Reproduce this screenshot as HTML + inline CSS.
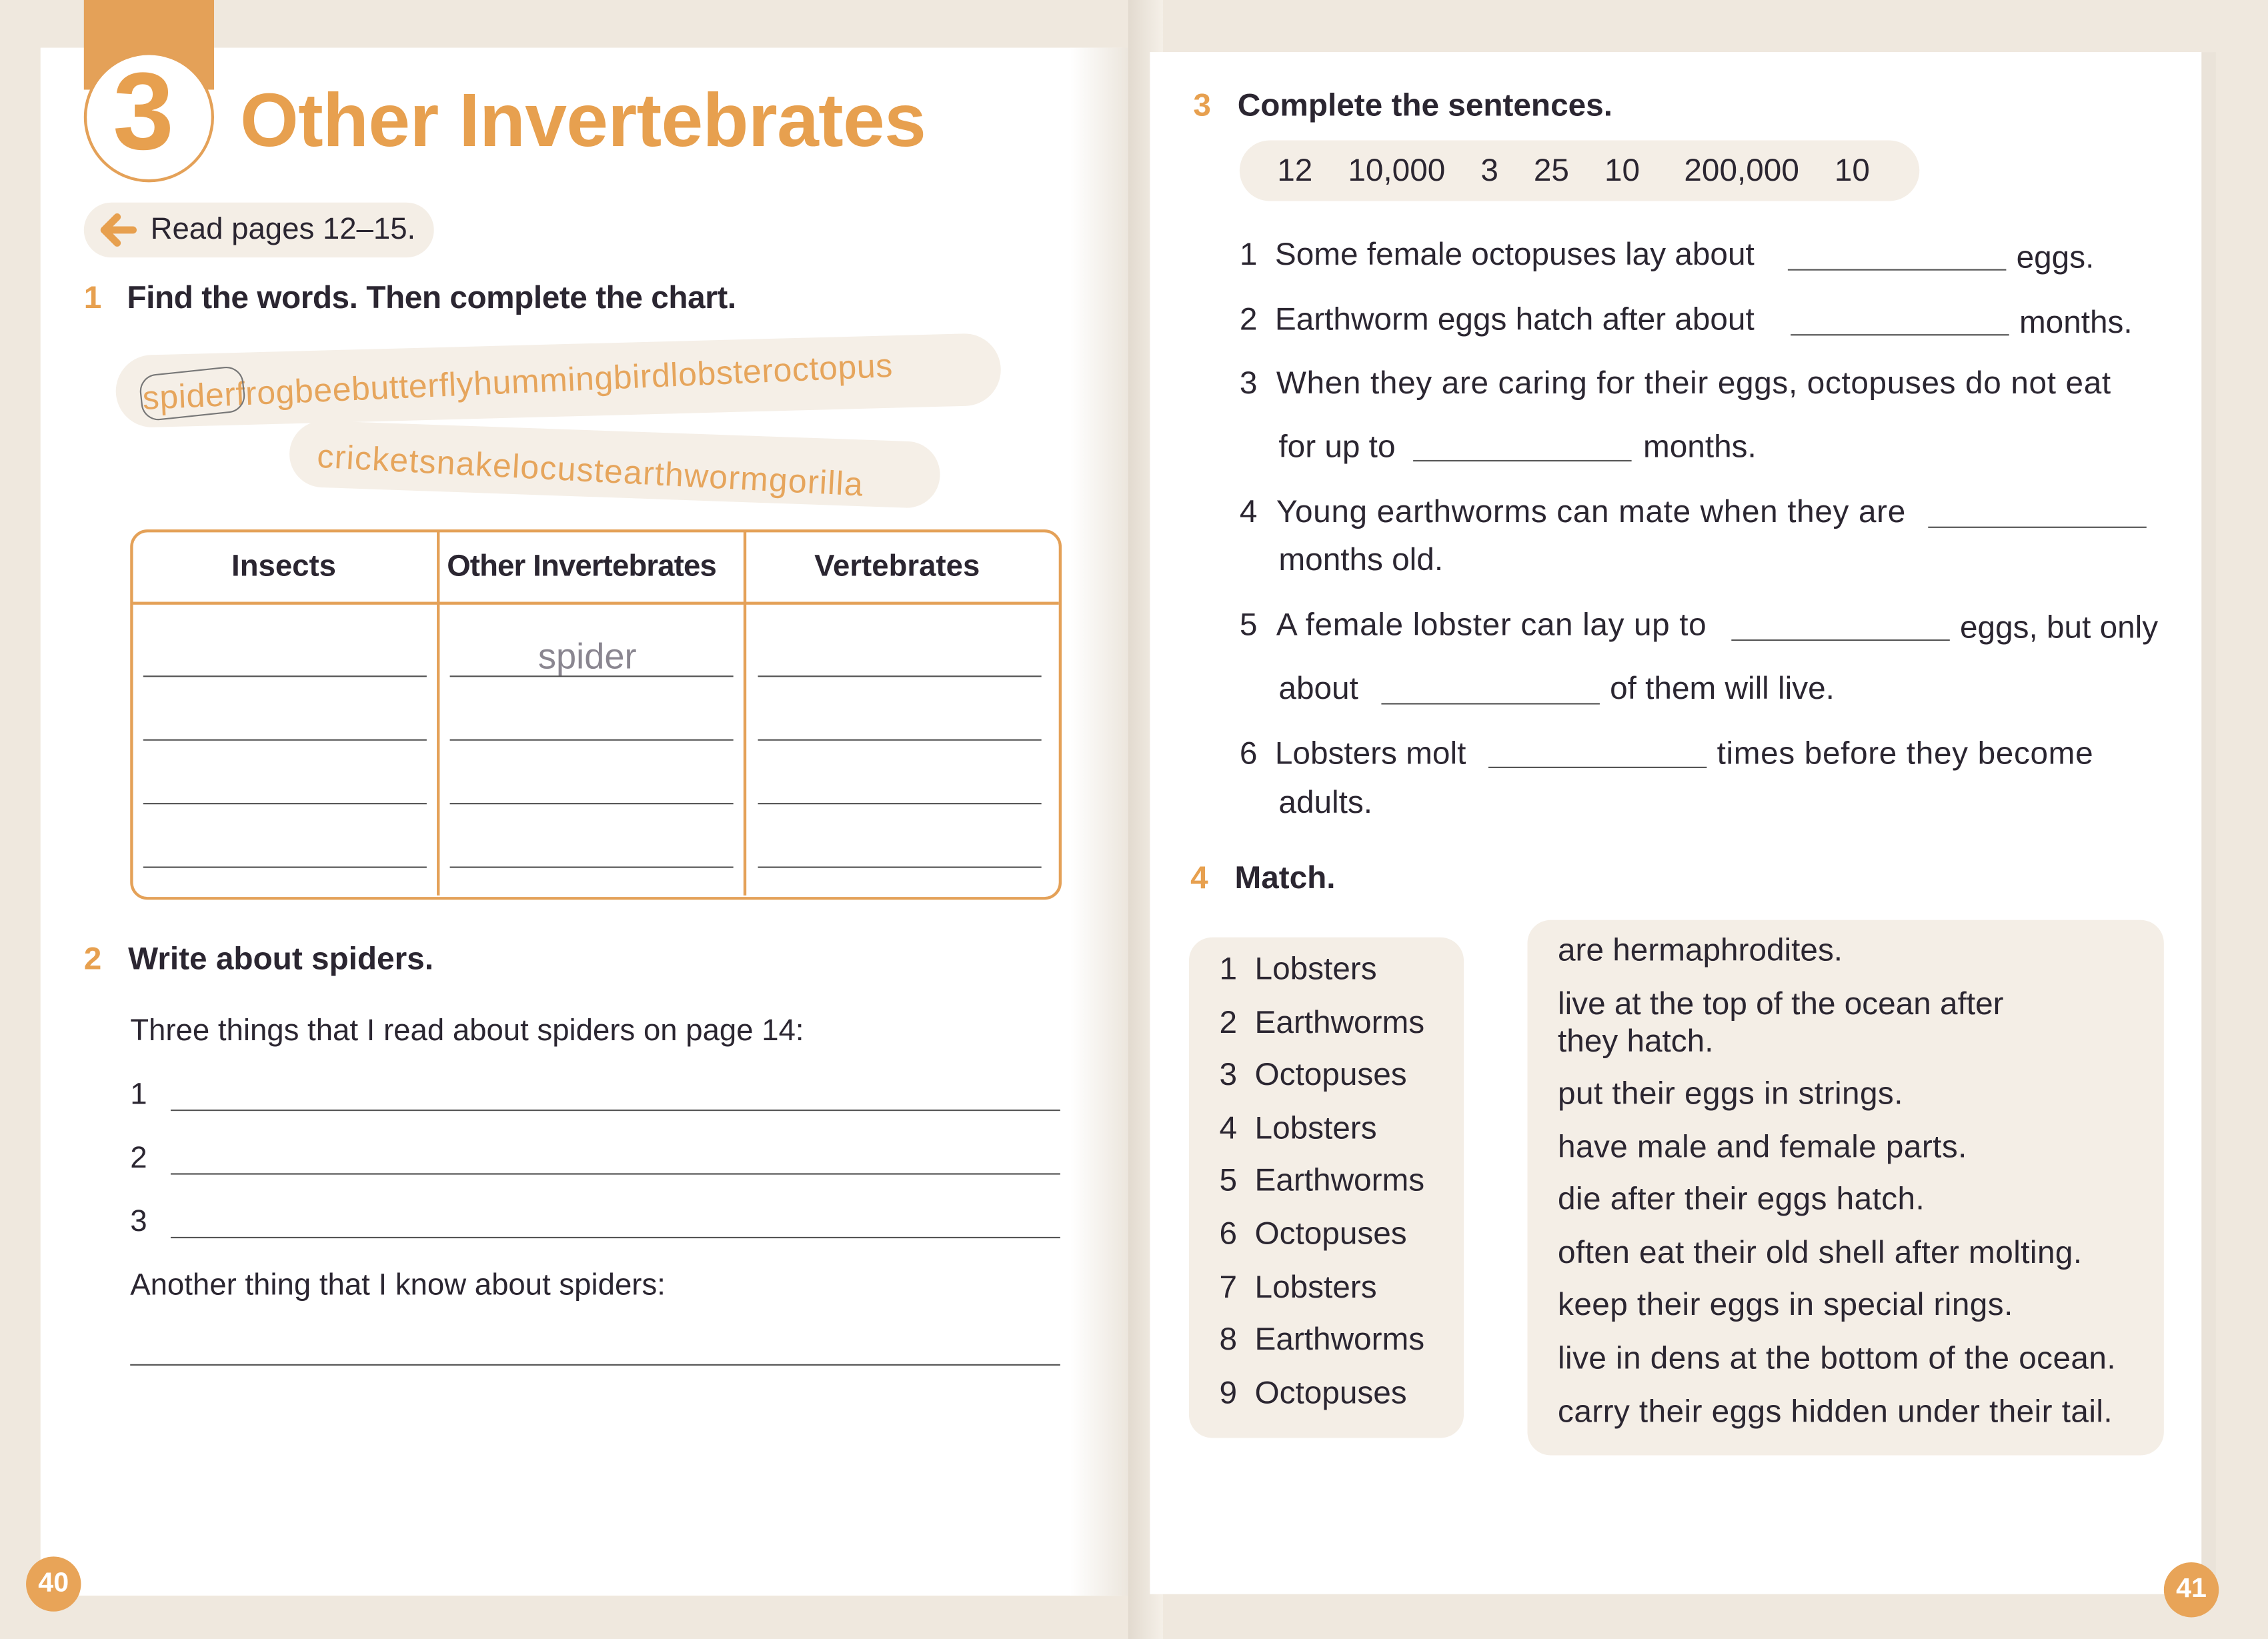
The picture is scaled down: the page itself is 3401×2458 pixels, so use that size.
<!DOCTYPE html>
<html><head><meta charset="utf-8"><style>
html,body{margin:0;padding:0;width:3401px;height:2458px;overflow:hidden;background:#efe8de}
#w{position:absolute;left:0;top:0;width:1568px;height:1133px;transform:scale(2.16901,2.16946);transform-origin:0 0;font-family:"Liberation Sans",sans-serif;color:#2b2631}
.a{position:absolute;white-space:nowrap}
.t{font-size:22px}
.o{color:#e7a04f;font-weight:bold}
.b{font-weight:bold}
.ln{position:absolute;border-bottom:1.3px solid #555;height:0}
</style></head><body><div id="w">
<div class="a" style="left:28px;top:33px;width:748px;height:1070px;background:#fff"></div>
<div class="a" style="left:740px;top:33px;width:40px;height:1070px;background:linear-gradient(90deg,#fff,#ece6dd)"></div>
<div class="a" style="left:780px;top:0;width:24px;height:1133px;background:linear-gradient(90deg,#e2dacf,#f5f0e8)"></div>
<div class="a" style="left:795px;top:36px;width:735px;height:1066px;background:#fff"></div>
<div class="a" style="left:1522px;top:36px;width:10px;height:1066px;background:#eae3d9"></div>

<div class="a" style="left:58px;top:0;width:90px;height:62px;background:#e4a158"></div>
<div class="a" style="left:58px;top:36px;width:86px;height:86px;border-radius:50%;background:#fff;border:2px solid #e4a158"></div>
<div class="a o" style="left:78px;top:34px;font-size:76px;letter-spacing:-2px">3</div>
<div class="a o" style="left:166px;top:54px;font-size:52px;letter-spacing:-0.3px">Other Invertebrates</div>

<div class="a" style="left:58px;top:140px;width:242px;height:38px;border-radius:19px;background:#f4eee6"></div>
<svg class="a" style="left:66px;top:146px" width="30" height="26" viewBox="0 0 30 26"><path d="M26 13H7M15 4L6 13l9 9" fill="none" stroke="#e7a04f" stroke-width="5" stroke-linecap="round" stroke-linejoin="round"/></svg>
<div class="a t" style="left:104px;top:147px;font-size:21px">Read pages 12–15.</div>

<div class="a t b" style="left:58px;top:193px;letter-spacing:-0.2px"><span class="o">1</span>&nbsp;&nbsp;&nbsp;Find the words. Then complete the chart.</div>

<div class="a" style="left:80px;top:238px;width:612px;height:50px;border-radius:25px;background:#f5efe7;transform:rotate(-1.5deg)"></div>
<div class="a" style="left:200px;top:298px;width:450px;height:46px;border-radius:23px;background:#f5efe7;transform:rotate(2deg)"></div>
<div class="a" style="left:98px;top:262px;font-size:23px;letter-spacing:0.3px;color:#e6a55c;transform:rotate(-2.5deg);transform-origin:0 0">spiderfrogbeebutterflyhummingbirdlobsteroctopus</div>
<div class="a" style="left:97px;top:256px;width:70px;height:30px;border:1.5px solid #777;border-radius:12px;transform:rotate(-6deg)"></div>
<div class="a" style="left:220px;top:302px;font-size:23px;letter-spacing:0.6px;color:#e6a55c;transform:rotate(3deg);transform-origin:0 0">cricketsnakelocustearthwormgorilla</div>

<div class="a" style="left:90px;top:366px;width:640px;height:252px;border:2px solid #e4a158;border-radius:12px"></div>
<div class="a" style="left:92px;top:416px;width:640px;border-top:2px solid #e4a158"></div>
<div class="a" style="left:302px;top:367px;height:252px;border-left:2px solid #e4a158"></div>
<div class="a" style="left:514px;top:367px;height:252px;border-left:2px solid #e4a158"></div>
<div class="a t b" style="left:160px;top:380px;font-size:21px">Insects</div>
<div class="a t b" style="left:309px;top:380px;font-size:21px;letter-spacing:-0.4px">Other Invertebrates</div>
<div class="a t b" style="left:563px;top:380px;font-size:21px">Vertebrates</div>
<div class="a" style="left:372px;top:440px;font-size:25px;color:#8a8690">spider</div>
<div class="ln" style="left:99px;top:467px;width:196px"></div><div class="ln" style="left:311px;top:467px;width:196px"></div><div class="ln" style="left:524px;top:467px;width:196px"></div>
<div class="ln" style="left:99px;top:511px;width:196px"></div><div class="ln" style="left:311px;top:511px;width:196px"></div><div class="ln" style="left:524px;top:511px;width:196px"></div>
<div class="ln" style="left:99px;top:555px;width:196px"></div><div class="ln" style="left:311px;top:555px;width:196px"></div><div class="ln" style="left:524px;top:555px;width:196px"></div>
<div class="ln" style="left:99px;top:599px;width:196px"></div><div class="ln" style="left:311px;top:599px;width:196px"></div><div class="ln" style="left:524px;top:599px;width:196px"></div>

<div class="a t b" style="left:58px;top:650px"><span class="o">2</span>&nbsp;&nbsp;&nbsp;Write about spiders.</div>
<div class="a t" style="left:90px;top:701px;font-size:21px">Three things that I read about spiders on page 14:</div>
<div class="a t" style="left:90px;top:745px;font-size:21px">1</div><div class="ln" style="left:118px;top:767px;width:615px"></div>
<div class="a t" style="left:90px;top:789px;font-size:21px">2</div><div class="ln" style="left:118px;top:811px;width:615px"></div>
<div class="a t" style="left:90px;top:833px;font-size:21px">3</div><div class="ln" style="left:118px;top:855px;width:615px"></div>
<div class="a t" style="left:90px;top:877px;font-size:21px">Another thing that I know about spiders:</div>
<div class="ln" style="left:90px;top:943px;width:643px"></div>

<div class="a" style="left:18px;top:1076px;width:38px;height:38px;border-radius:50%;background:#e8a458;color:#fff;font-size:19px;font-weight:bold;text-align:center;line-height:38px">40</div>
<div class="a" style="left:1496px;top:1080px;width:38px;height:38px;border-radius:50%;background:#e8a458;color:#fff;font-size:19px;font-weight:bold;text-align:center;line-height:38px">41</div>

<div class="a t b" style="left:825px;top:60px"><span class="o">3</span>&nbsp;&nbsp;&nbsp;Complete the sentences.</div>
<div class="a" style="left:857px;top:97px;width:470px;height:42px;border-radius:21px;background:#f4eee6"></div>
<div class="a t" style="left:883px;top:105px;font-size:22px">12&nbsp;&nbsp;&nbsp;&nbsp;10,000&nbsp;&nbsp;&nbsp;&nbsp;3&nbsp;&nbsp;&nbsp;&nbsp;25&nbsp;&nbsp;&nbsp;&nbsp;10&nbsp;&nbsp;&nbsp;&nbsp;&nbsp;200,000&nbsp;&nbsp;&nbsp;&nbsp;10</div>

<div class="a t" style="left:857px;top:163px">1&nbsp;&nbsp;Some female octopuses lay about</div><div class="ln" style="left:1236px;top:186px;width:151px"></div><div class="a t" style="left:1394px;top:165px">eggs.</div>
<div class="a t" style="left:857px;top:208px">2&nbsp;&nbsp;Earthworm eggs hatch after about</div><div class="ln" style="left:1238px;top:231px;width:151px"></div><div class="a t" style="left:1396px;top:210px">months.</div>
<div class="a t" style="left:857px;top:252px;letter-spacing:0.3px">3&nbsp;&nbsp;When they are caring for their eggs, octopuses do not eat</div>
<div class="a t" style="left:884px;top:296px">for up to</div><div class="ln" style="left:977px;top:318px;width:151px"></div><div class="a t" style="left:1136px;top:296px">months.</div>
<div class="a t" style="left:857px;top:341px;letter-spacing:0.3px">4&nbsp;&nbsp;Young earthworms can mate when they are</div><div class="ln" style="left:1333px;top:364px;width:151px"></div>
<div class="a t" style="left:884px;top:374px">months old.</div>
<div class="a t" style="left:857px;top:419px;letter-spacing:0.3px">5&nbsp;&nbsp;A female lobster can lay up to</div><div class="ln" style="left:1197px;top:442px;width:151px"></div><div class="a t" style="left:1355px;top:421px">eggs, but only</div>
<div class="a t" style="left:884px;top:463px">about</div><div class="ln" style="left:955px;top:486px;width:151px"></div><div class="a t" style="left:1113px;top:463px">of them will live.</div>
<div class="a t" style="left:857px;top:508px">6&nbsp;&nbsp;Lobsters molt</div><div class="ln" style="left:1029px;top:530px;width:151px"></div><div class="a t" style="left:1187px;top:508px;letter-spacing:0.3px">times before they become</div>
<div class="a t" style="left:884px;top:542px">adults.</div>

<div class="a t b" style="left:823px;top:594px"><span class="o">4</span>&nbsp;&nbsp;&nbsp;Match.</div>
<div class="a" style="left:822px;top:648px;width:190px;height:346px;border-radius:16px;background:#f4eee6"></div>
<div class="a" style="left:1056px;top:636px;width:440px;height:370px;border-radius:16px;background:#f4eee6"></div>
<div class="a t" style="left:843px;top:652px;line-height:36.6px">1&nbsp;&nbsp;Lobsters<br>2&nbsp;&nbsp;Earthworms<br>3&nbsp;&nbsp;Octopuses<br>4&nbsp;&nbsp;Lobsters<br>5&nbsp;&nbsp;Earthworms<br>6&nbsp;&nbsp;Octopuses<br>7&nbsp;&nbsp;Lobsters<br>8&nbsp;&nbsp;Earthworms<br>9&nbsp;&nbsp;Octopuses</div>
<div class="a t" style="left:1077px;top:644px">are hermaphrodites.</div>
<div class="a t" style="left:1077px;top:681px;line-height:26px">live at the top of the ocean after<br>they hatch.</div>
<div class="a t" style="left:1077px;top:738px;line-height:36.6px;letter-spacing:0.2px">put their eggs in strings.<br>have male and female parts.<br>die after their eggs hatch.<br>often eat their old shell after molting.<br>keep their eggs in special rings.<br>live in dens at the bottom of the ocean.<br>carry their eggs hidden under their tail.</div>
</div></body></html>
